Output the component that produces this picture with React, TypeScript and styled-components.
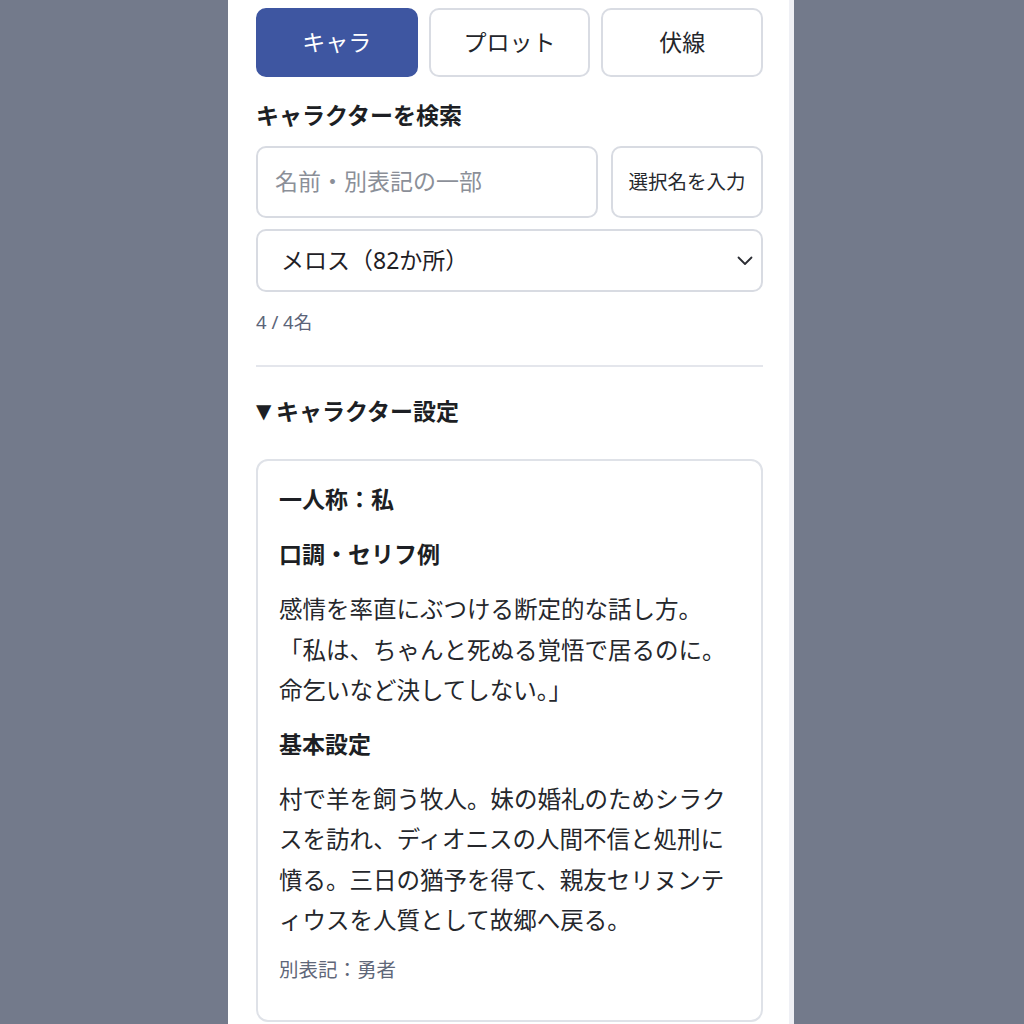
import React, { useState } from 'react';
import styled, { createGlobalStyle } from 'styled-components';

const GlobalStyle = createGlobalStyle`
  html, body {
    margin: 0;
    padding: 0;
    background: #737a8b;
  }
  body {
    font-family: "Noto Sans", "Noto Sans CJK JP", sans-serif;
    color: #1f2126;
  }
  * {
    box-sizing: border-box;
  }
`;

const tabs = ['キャラ', 'プロット', '伏線'];

const App = () => {
  const [active, setActive] = useState(0);
  return (
    <>
      <GlobalStyle />
      <Panel>
        <TabBar>
          {tabs.map((label, i) => (
            <Tab key={label} $active={i === active} onClick={() => setActive(i)}>
              {label}
            </Tab>
          ))}
        </TabBar>

        <SectionLabel>キャラクターを検索</SectionLabel>
        <SearchRow>
          <SearchInput placeholder="名前・別表記の一部" />
          <InsertButton>選択名を入力</InsertButton>
        </SearchRow>
        <SelectBox>
          <span>メロス（82か所）</span>
          <svg width="16" height="10" viewBox="0 0 16 10" fill="none">
            <polyline points="1.5,1.5 8,8 14.5,1.5" stroke="#2b2d33" strokeWidth="1.8" strokeLinecap="round" strokeLinejoin="round" />
          </svg>
        </SelectBox>
        <Count>4 / 4名</Count>

        <Divider />

        <Details open>
          <Summary>
            <Marker>▼</Marker>キャラクター設定
          </Summary>
          <Card>
            <ItemTitle $gap={23}>一人称：私</ItemTitle>
            <ItemTitle $gap={19}>口調・セリフ例</ItemTitle>
            <Body $gap={17}>
              感情を率直にぶつける断定的な話し方。
              <br />
              「私は、ちゃんと死ぬる覚悟で居るのに。命乞いなど決してしない。」
            </Body>
            <ItemTitle $gap={19}>基本設定</ItemTitle>
            <Body $gap={15}>
              村で羊を飼う牧人。妹の婚礼のためシラクスを訪れ、ディオニスの人間不信と処刑に憤る。三日の猶予を得て、親友セリヌンティウスを人質として故郷へ戻る。
            </Body>
            <Alias>別表記：勇者</Alias>
          </Card>
        </Details>
      </Panel>
    </>
  );
};

const Panel = styled.div`
  width: 566px;
  min-height: 1024px;
  margin: 0 0 0 228px;
  padding: 8px 26px 0 28px;
  background: #ffffff;
  border-right: 5px solid #eff0f5;
  display: flex;
  flex-direction: column;
`;

const TabBar = styled.div`
  display: grid;
  grid-template-columns: repeat(3, 1fr);
  gap: 11px;
`;

const Tab = styled.button<{ $active: boolean }>`
  height: 69px;
  padding: 0 0 3px;
  border-radius: 10px;
  border: 2px solid ${({ $active }) => ($active ? '#3e56a1' : '#d9dce3')};
  background: ${({ $active }) => ($active ? '#3e56a1' : '#ffffff')};
  color: ${({ $active }) => ($active ? '#ffffff' : '#24262b')};
  font-family: inherit;
  font-size: 23px;
  cursor: pointer;
`;

const SectionLabel = styled.h2`
  margin: 22px 0 0;
  font-size: 23px;
  line-height: 32px;
  font-weight: 700;
  color: #1d1f24;
`;

const SearchRow = styled.div`
  display: flex;
  gap: 13px;
  margin-top: 15px;
`;

const SearchInput = styled.input`
  flex: 1;
  height: 72px;
  min-width: 0;
  padding: 0 17px 3px;
  border: 2px solid #d8dbe2;
  border-radius: 10px;
  font-family: inherit;
  font-size: 23px;
  color: #1f2126;
  outline: none;
  &::placeholder {
    color: #8b8f98;
  }
`;

const InsertButton = styled.button`
  width: 152px;
  height: 72px;
  border: 2px solid #d8dbe2;
  border-radius: 10px;
  background: #ffffff;
  font-family: inherit;
  font-size: 19.5px;
  color: #26282d;
  padding: 0 0 3px;
  cursor: pointer;
`;

const SelectBox = styled.button`
  margin-top: 11px;
  height: 63px;
  display: flex;
  align-items: center;
  justify-content: space-between;
  padding: 0 8px 4px 23px;
  border: 2px solid #d8dbe2;
  border-radius: 10px;
  background: #ffffff;
  font-family: inherit;
  font-size: 23px;
  color: #1f2126;
  cursor: pointer;

  svg {
    margin-top: 4px;
  }
`;

const Count = styled.div`
  margin-top: 18px;
  font-size: 18.5px;
  line-height: 24px;
  color: #5b6479;
`;

const Divider = styled.hr`
  margin: 31px 0 0;
  border: none;
  height: 2px;
  background: #e4e6ec;
`;

const Details = styled.details`
  margin-top: 28px;
`;

const Summary = styled.summary`
  list-style: none;
  display: flex;
  align-items: center;
  font-size: 23px;
  line-height: 32px;
  font-weight: 700;
  color: #1d1f24;
  cursor: pointer;
  &::-webkit-details-marker {
    display: none;
  }
`;

const Marker = styled.span`
  font-family: "DejaVu Sans", sans-serif;
  font-size: 20px;
  width: 20px;
`;

const Card = styled.div`
  margin-top: 32px;
  padding: 22px 20px 36px 21px;
  border: 2px solid #dfe2e8;
  border-radius: 12px;
  display: flex;
  flex-direction: column;
`;

const ItemTitle = styled.h3<{ $gap: number }>`
  margin: 0 0 ${({ $gap }) => $gap}px;
  font-size: 23px;
  line-height: 32px;
  font-weight: 700;
  color: #1d1f24;
`;

const Body = styled.p<{ $gap: number }>`
  margin: 0 0 ${({ $gap }) => $gap}px;
  font-size: 23.5px;
  line-height: 40.5px;
  color: #25272c;
`;

const Alias = styled.div`
  font-size: 19.5px;
  line-height: 28px;
  color: #5f6779;
`;

export default App;
